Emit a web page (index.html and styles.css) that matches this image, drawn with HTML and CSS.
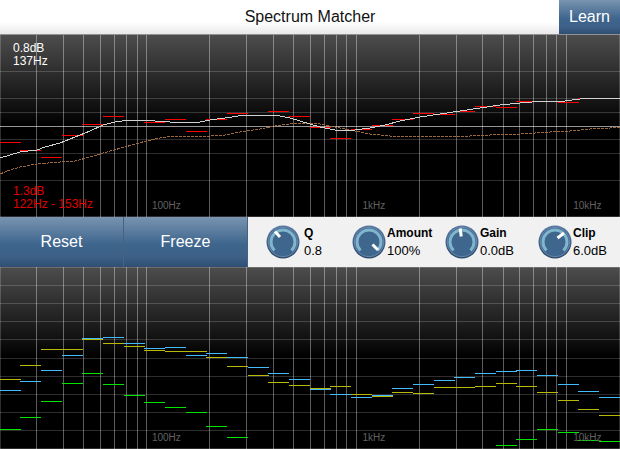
FILE: index.html
```html
<!DOCTYPE html>
<html lang="en">
<head>
<meta charset="utf-8">
<title>Spectrum Matcher</title>
<link rel="stylesheet" href="styles.css">
</head>
<body>
<main class="app">
  <header class="header">
    <h1 class="title">Spectrum Matcher</h1>
    <button class="button learn" type="button">Learn</button>
  </header>

  <section class="plot" aria-label="Matching curve">
    <svg class="chart" id="curve" viewBox="0 0 620 182" preserveAspectRatio="none" shape-rendering="crispEdges"></svg>
    <p class="readout readout-top">0.8dB<br>137Hz</p>
    <p class="readout readout-bottom">1.3dB<br>122Hz - 153Hz</p>
    <div class="axis"><span>100Hz</span><span>1kHz</span><span>10kHz</span></div>
  </section>

  <section class="toolbar">
    <button class="button" type="button">Reset</button>
    <button class="button" type="button">Freeze</button>
    <div class="control control-short">
      <div class="knob"><svg class="dial" viewBox="0 0 34 34"><use href="#knob"/><path class="pointer" d="M9 6.500L14 12"/></svg><input class="range" id="q" type="range" min="0" max="2" step="0.1" value="0.8"></div>
      <div class="text"><label for="q">Q</label><output for="q">0.8</output></div>
    </div>
    <div class="control">
      <div class="knob"><svg class="dial" viewBox="0 0 34 34"><use href="#knob"/><path class="pointer" d="M20.500 19.500L26 25"/></svg><input class="range" id="amount" type="range" min="0" max="100" value="100"></div>
      <div class="text"><label for="amount">Amount</label><output for="amount">100%</output></div>
    </div>
    <div class="control">
      <div class="knob"><svg class="dial" viewBox="0 0 34 34"><use href="#knob"/><path class="pointer" d="M15.200 3.500L16.200 11.500"/></svg><input class="range" id="gain" type="range" min="-12" max="12" value="0"></div>
      <div class="text"><label for="gain">Gain</label><output for="gain">0.0dB</output></div>
    </div>
    <div class="control">
      <div class="knob"><svg class="dial" viewBox="0 0 34 34"><use href="#knob"/><path class="pointer" d="M19.500 13L26 8"/></svg><input class="range" id="clip" type="range" min="0" max="12" value="6"></div>
      <div class="text"><label for="clip">Clip</label><output for="clip">6.0dB</output></div>
    </div>
  </section>

  <section class="plot" aria-label="Spectra">
    <svg class="chart" id="spectra" viewBox="0 0 620 182" preserveAspectRatio="none" shape-rendering="crispEdges"></svg>
    <div class="axis"><span>100Hz</span><span>1kHz</span><span>10kHz</span></div>
  </section>
</main>

<svg class="symbols" aria-hidden="true">
  <defs>
    <linearGradient id="rim" x1="0" y1="0" x2="0" y2="1"><stop offset="0" stop-color="#5878a3"/><stop offset="1" stop-color="#2b486a"/></linearGradient>
    <symbol id="knob" viewBox="0 0 34 34">
      <circle cx="17" cy="17" r="16.500" fill="url(#rim)"/>
      <circle cx="17" cy="17" r="14.800" fill="#3f668d" stroke="#7393b5" stroke-width=".8"/>
      <path d="M8.500 25.500A12 12 0 1 1 25.500 25.500" fill="none" stroke="#80b5ce" stroke-width="3"/>
    </symbol>
  </defs>
</svg>
<script src="plots.js"></script>
</body>
</html>
```

FILE: styles.css
```css
* {
  box-sizing: border-box;
}

body {
  margin: 0;
  background: #000;
  font-family: "Liberation Sans", Arial, sans-serif;
}

.header {
  display: grid;
  grid-template-columns: 1fr 61px;
  height: 35px;
  border-bottom: 1px solid #929292;
  background: linear-gradient(#fff 65%, #e9e9e9);
}

.title {
  grid-area: 1 / 1 / 2 / 3;
  margin: 0;
  font-size: 16px;
  font-weight: normal;
  line-height: 34px;
  text-align: center;
  color: #111;
}

.button {
  border: 0;
  border-right: 1px solid #46627f;
  padding: 0;
  background: linear-gradient(#7994b0, #3e658d 55%, #3d6087 80%, #2f4f73);
  color: #fff;
  font-family: inherit;
  font-size: 16px;
}

.learn {
  grid-area: 1 / 2;
  border-right: 0;
}

.plot {
  position: relative;
  background: linear-gradient(#4d4d4d, #000 50%);
}

.chart {
  display: block;
  width: 100%;
  height: auto;
}

.readout {
  position: absolute;
  left: 13px;
  margin: 0;
  font-size: 12px;
  line-height: 13px;
}

.readout-top {
  top: 7px;
  color: #fff;
}

.readout-bottom {
  bottom: 6px;
  color: #e00000;
}

.axis {
  position: absolute;
  left: 24.500%;
  right: 0;
  bottom: 5px;
  display: grid;
  grid-template-columns: 45% 45% 10%;
  font-size: 10px;
  line-height: 12px;
  color: #626262;
}

.toolbar {
  display: grid;
  grid-template-columns: repeat(2, 20%) repeat(4, 15%);
  height: 50px;
  background: #f1f1f1;
}

.control {
  display: flex;
  align-items: center;
  gap: 1px;
  padding-left: 11px;
}

.control-short {
  gap: 4px;
  padding-left: 18px;
}

.knob {
  position: relative;
  flex: none;
  width: 34px;
  height: 34px;
}

.dial {
  display: block;
  width: 100%;
}

.pointer {
  stroke: #fff;
  stroke-width: 3;
}

.range {
  position: absolute;
  inset: 0;
  width: 100%;
  height: 100%;
  margin: 0;
  opacity: 0;
}

.text {
  display: flex;
  flex-direction: column;
  color: #000;
  line-height: 17px;
}

.text label {
  font-size: 12px;
  font-weight: bold;
}

.text output {
  font-size: 13px;
}

.symbols {
  position: absolute;
  width: 0;
  height: 0;
}
```

FILE: plots.js
```js
const decades = [36, 63, 83, 100, 114, 126, 137, 146, 209, 246, 273, 293, 310, 324, 336,
  346, 356, 419, 456, 482, 503, 519, 533, 546, 556, 566];

const rect = (x, y, w, h, fill) =>
  `<path fill="${fill}" d="M${x} ${y}h${w}v${h}h${-w}z"/>`;

function grid(levels) {
  return levels.map(y => rect(0, y, 620, 1, "#ffffff2e")).join("") +
    [0, ...decades, 619].map((x, i, all) =>
      rect(x, 0, 1, 182, i === 0 || i === all.length - 1 ? "#ffffff2e" : "#ffffff5c")).join("");
}

// One short bar per third-octave band; null leaves a band empty.
function bands(values, fill) {
  return values.map((y, i) =>
    y === null ? "" : rect(Math.floor(i * 62 / 3), y, 21, 1, fill)).join("");
}

function curve(points, attributes) {
  return `<polyline fill="none" ${attributes} points="${points}"/>`;
}

document.getElementById("curve").innerHTML =
  grid([36, 63, 77, 104, 118, 145, 181]) +
  rect(0, 91, 620, 1, "#ffffff96") +
  bands([107, 115, 122, 100, 89, 81, 85, 87, 84, 96, 84, 78, 80, 76, 81, 92, 103, 94, 90, 84,
    78, 79, 76, 71, 72, 66, 66, 67, 63, 63], "#ff0000") +
  curve("0,139 10,135 20,132 37,129 60,127 75,126 90,122 110,116 125,112 146,106 160,103 175,101 210,101 225,100 240,97 260,94 275,91 290,89 300,88 315,88 325,90 340,93 355,96 370,99 390,101 410,102 440,101 470,101 490,100 520,99 550,97 570,96 590,94 610,93 620,92",
    'stroke="#9b693d" stroke-dasharray="3 1"') +
  curve("0,123 10,120 20,117 37,115 45,112 60,108 75,102 90,96 103,90 115,87 130,85 146,85 155,86 170,87 200,87 210,85 225,83 245,80 275,80 290,83 310,89 320,92 335,95 355,95 370,93 385,90 400,86 420,82 440,79 460,76 480,73 500,70 520,68 545,66 565,66 580,64 592,63 620,63",
    'stroke="#d2d2d2"');

document.getElementById("spectra").innerHTML =
  rect(0, 0, 620, 1, "#ffffff2e") +
  grid([18, 36, 54, 72, 91, 109, 127, 145, 163, 181]) +
  bands([162, 150, 134, 116, 106, 117, 128, 135, 140, 145, 159, 170, null, null, null, null,
    null, null, null, null, null, null, null, null, 178, 172, 162, 165, 173, 174], "#00e600") +
  bands([123, 114, 103, 88, 71, 70, 76, 81, 80, 88, 86, 90, 100, 106, 112, 122, 127, 130, 128,
    121, 117, 113, 110, 106, 104, 103, 108, 117, 124, 130], "#42bcff") +
  bands([112, 98, 82, 82, 72, 76, 79, 83, 84, 84, 90, 99, 108, 115, 118, 121, 119, 127, 129,
    125, 126, 120, 120, 119, 116, 119, 125, 133, 142, 148], "#b9b90a");
```
